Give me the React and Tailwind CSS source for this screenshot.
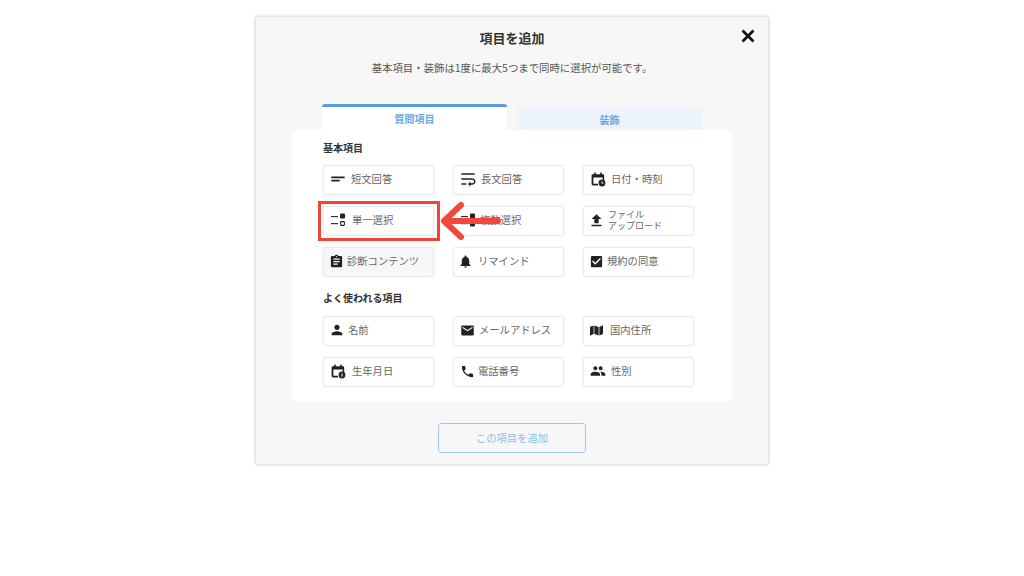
import { MdShortText, MdWrapText, MdFileUpload, MdAssignment, MdNotifications, MdCheckBox, MdPerson, MdEmail, MdPhone, MdPeople } from "react-icons/md";
import { FaMap } from "react-icons/fa";

function CalendarIcon({ badge }) {
  return (
    <svg width="16" height="16" viewBox="0 0 16 16" className="shrink-0">
      <path d="M3 3.2h10a1.2 1.2 0 0 1 1.2 1.2V9h-1.6V6.6H3.4v6.2H8v1.6H3a1.4 1.4 0 0 1-1.4-1.4V4.4A1.2 1.2 0 0 1 3 3.2z" fill="#222" />
      <rect x="4.2" y="1.6" width="1.6" height="3" fill="#222" />
      <rect x="10.2" y="1.6" width="1.6" height="3" fill="#222" />
      <circle cx="12" cy="12" r="3.4" fill="#222" />
      {badge === "clock" ? <path d="M12 10.4v1.8h1.4" stroke="#fff" strokeWidth="0.9" fill="none" /> : <rect x="11.5" y="10.4" width="1" height="3.2" fill="#fff" />}
    </svg>
  );
}

function SingleIcon() {
  return (
    <svg width="16" height="16" viewBox="0 0 16 16" className="shrink-0">
      <rect x="1" y="4" width="7" height="1.2" fill="#333" />
      <rect x="1" y="11" width="7" height="1.2" fill="#333" />
      <rect x="10" y="1.5" width="5" height="5" rx="1" fill="#222" />
      <rect x="10.6" y="9.6" width="3.8" height="3.8" rx="0.8" fill="none" stroke="#222" strokeWidth="1.1" />
    </svg>
  );
}

function MultiIcon() {
  return (
    <svg width="16" height="16" viewBox="0 0 16 16" className="shrink-0">
      <rect x="1" y="4" width="7" height="1.2" fill="#333" />
      <rect x="1" y="11" width="7" height="1.2" fill="#333" />
      <rect x="10" y="1.5" width="5" height="5" rx="1" fill="#222" />
      <rect x="10" y="9.5" width="5" height="5" rx="1" fill="#222" />
    </svg>
  );
}

const ic = "shrink-0 text-[#222]";

const basicItems = [
  { label: "短文回答", icon: <MdShortText size={20} className={`${ic} -ml-[2px]`} />, gap: "gap-[3px]" },
  { label: "長文回答", icon: <MdWrapText size={20} className={`${ic} -ml-[2px]`} />, gap: "gap-[3px]" },
  { label: "日付・時刻", icon: <CalendarIcon badge="clock" />, gap: "gap-[5px]" },
  { label: "単一選択", icon: <SingleIcon />, gap: "gap-[6px]" },
  { label: "複数選択", icon: <MultiIcon />, gap: "gap-[4px]" },
  { label: "ファイル\nアップロード", icon: <MdFileUpload size={17} className={`${ic} -ml-[2px]`} />, gap: "gap-[3px]", small: true },
  { label: "診断コンテンツ", icon: <MdAssignment size={15} className={`${ic} -ml-[1px]`} />, gap: "gap-[3px]", muted: true },
  { label: "リマインド", icon: <MdNotifications size={15} className={`${ic} -ml-[2px]`} />, gap: "gap-[5px]" },
  { label: "規約の同意", icon: <MdCheckBox size={15} className={`${ic} -ml-[1px]`} />, gap: "gap-[3px]" },
];

const commonItems = [
  { label: "名前", icon: <MdPerson size={16} className={`${ic} -ml-[1px]`} />, gap: "gap-[3px]" },
  { label: "メールアドレス", icon: <MdEmail size={15} className={ic} />, gap: "gap-[4px]" },
  { label: "国内住所", icon: <FaMap size={13} className={ic} />, gap: "gap-[7px]" },
  { label: "生年月日", icon: <CalendarIcon badge="info" />, gap: "gap-[6px]" },
  { label: "電話番号", icon: <MdPhone size={15} className={ic} />, gap: "gap-[3px]" },
  { label: "性別", icon: <MdPeople size={16} className={ic} />, gap: "gap-[5px]" },
];

function ItemButton({ item }) {
  return (
    <div className={`flex items-center h-[30px] rounded-[3px] border border-[#ebebeb] pl-[6px] pb-[2px] shadow-[0_0_2px_rgba(0,0,0,0.08)] ${item.gap} ${item.muted ? "bg-[#f7f7f7]" : "bg-white"}`}>
      {item.icon}
      <span className={`text-[#666] whitespace-pre ${item.small ? "text-[9px] leading-[11px]" : "text-[10.3px] leading-[12px]"}`}>{item.label}</span>
    </div>
  );
}

function ItemGrid({ items }) {
  return (
    <div className="grid grid-cols-[111px_111px_111px] gap-x-[19px] gap-y-[11px]">
      {items.map((item) => (
        <ItemButton key={item.label} item={item} />
      ))}
    </div>
  );
}

export default function App() {
  return (
    <div className="relative w-[1024px] h-[576px] bg-white pt-[17px] overflow-hidden font-['Noto_Sans_CJK_JP','Noto_Sans',sans-serif]">
      <div className="relative mx-auto w-[512px] h-[447px] bg-[#f7f7f7] shadow-[0_0_4px_rgba(0,0,0,0.25)] flex flex-col items-center">
        <h1 className="mt-[12px] h-[18px] leading-[18px] text-[13px] font-bold text-[#333]">項目を追加</h1>
        <svg className="absolute top-[11px] right-[12px]" width="16" height="16" viewBox="0 0 16 16">
          <path d="M2.5 2.5l11 11M13.5 2.5l-11 11" stroke="#111" strokeWidth="2.8" fill="none" />
        </svg>
        <p className="mt-[13px] h-[16px] leading-[16px] text-[10.4px] text-[#555]">基本項目・装飾は1度に最大5つまで同時に選択が可能です。</p>

        <div className="mt-[28px] w-[440px] flex items-end pl-[30px] gap-[10px] h-[26px]">
          <div className="w-[185px] h-[26px] bg-white border-t-[3px] border-[#5a9be0] rounded-t-[3px] flex items-center justify-center text-[10px] font-bold text-[#6aa6e6]">質問項目</div>
          <div className="w-[185px] h-[22px] bg-[#ecf3fb] rounded-t-[3px] flex items-center justify-center text-[10px] font-bold text-[#6aa6e6]">装飾</div>
        </div>

        <div className="w-[440px] h-[272px] bg-white rounded-[6px] pl-[31px] pr-[39px] pt-[10px]">
          <h2 className="h-[16px] leading-[16px] text-[10px] font-bold text-[#333] mb-[9px]">基本項目</h2>
          <ItemGrid items={basicItems} />
          <h2 className="mt-[13px] h-[16px] leading-[16px] text-[10px] font-bold text-[#333] mb-[10px]">よく使われる項目</h2>
          <ItemGrid items={commonItems} />
        </div>

        <div className="mt-[21px] w-[148px] h-[30px] rounded-[3px] border-[1.5px] border-[#9fc8f1] flex items-center justify-center text-[10.3px] text-[#8dbcec]">この項目を追加</div>
      </div>

      {/* annotation over the dialog */}
      <div className="absolute left-[318px] top-[201px] w-[122px] h-[40px] border-[3px] border-[#f0433a]" />
      <svg className="absolute left-[436px] top-[198px]" width="68" height="46" viewBox="0 0 68 46">
        <path d="M62 23H9M25 7L8 23l17 16" fill="none" stroke="#f4473c" strokeWidth="6" strokeLinecap="round" strokeLinejoin="round" />
      </svg>
    </div>
  );
}
